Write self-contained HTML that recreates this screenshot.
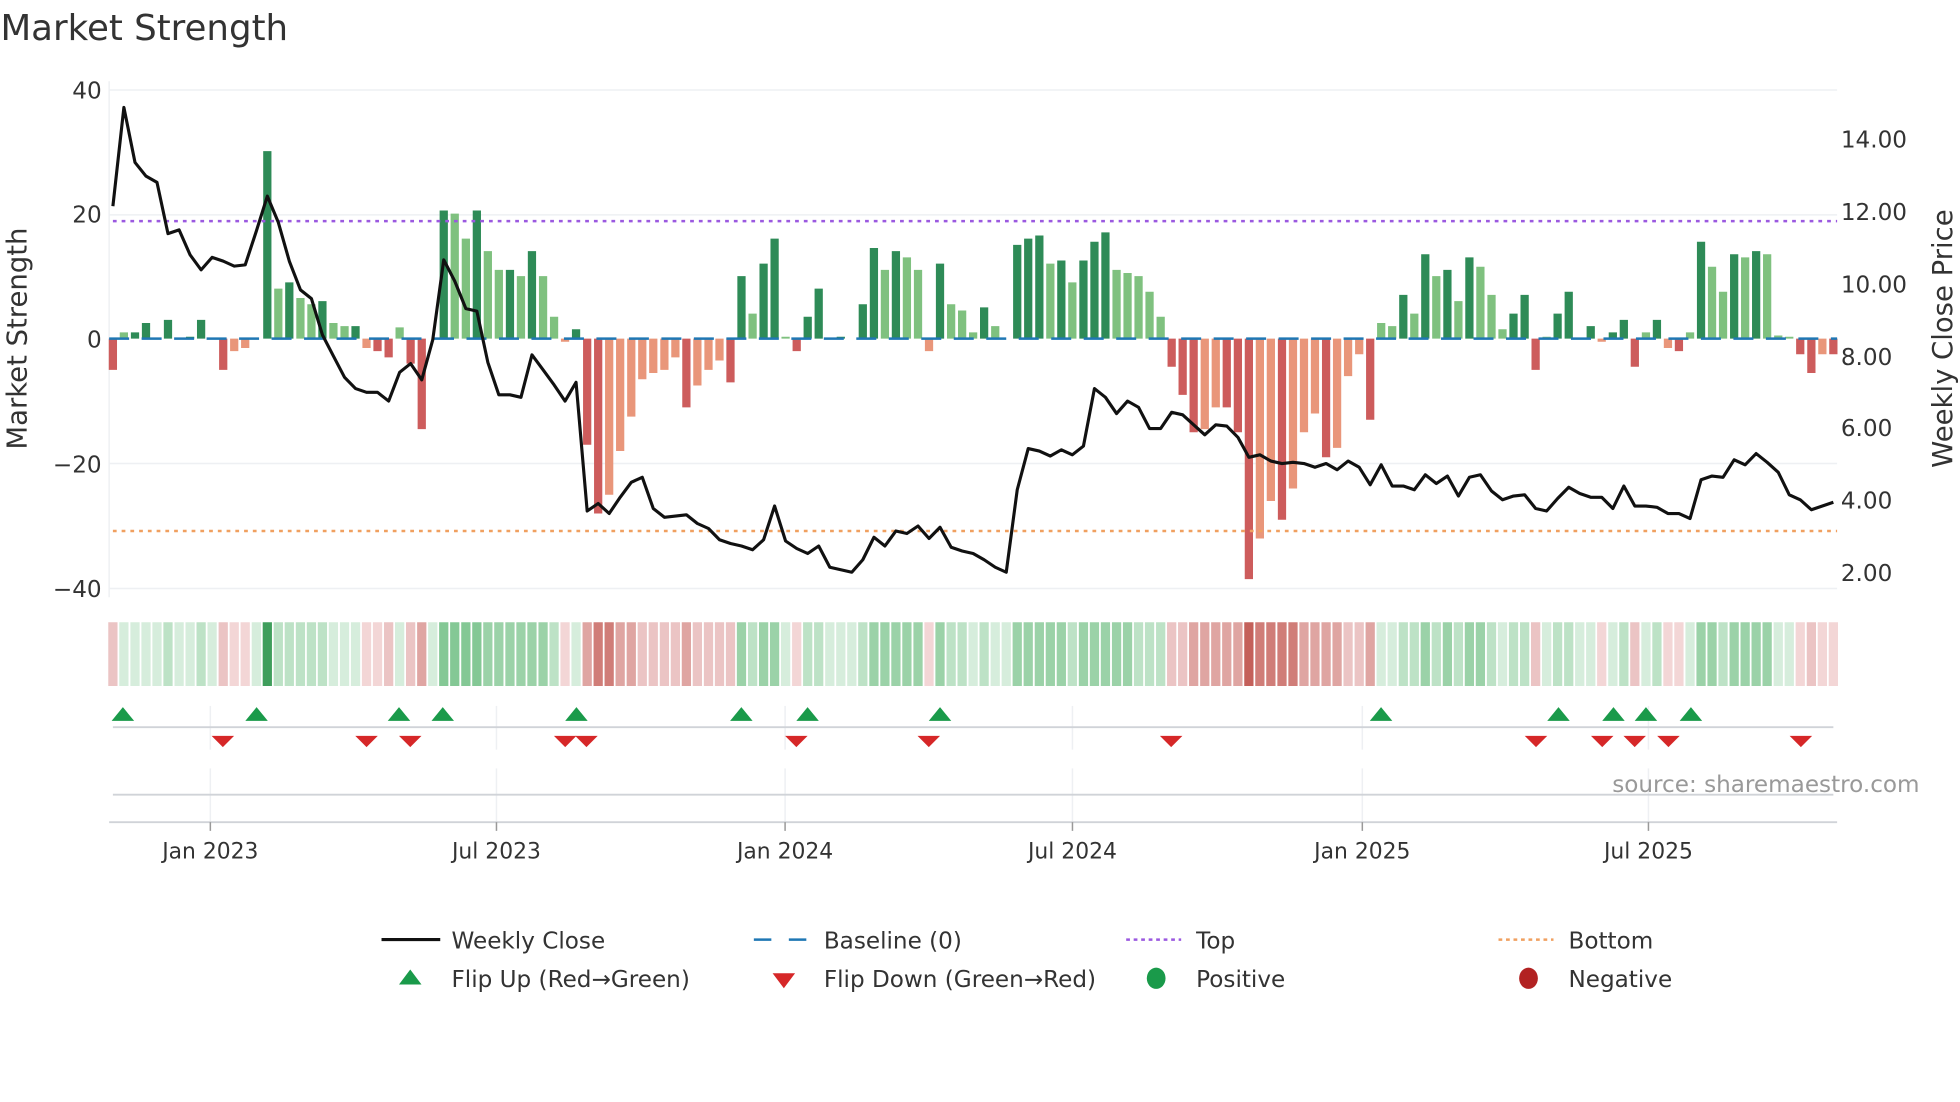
<!DOCTYPE html>
<html><head><meta charset="utf-8"><style>
html,body{margin:0;padding:0;background:#fff;}
svg{display:block;font-family:"DejaVu Sans","Liberation Sans",sans-serif;}
</style></head><body>
<svg width="1960" height="1102" viewBox="0 0 1568 882" xmlns="http://www.w3.org/2000/svg">
<rect width="1568" height="882" fill="#fff"/>
<text x="0" y="32" font-size="28.5" fill="#333">Market Strength</text>
<g stroke="#eef0f3" stroke-width="1.2">
<line x1="87" y1="72" x2="1470" y2="72"/><line x1="87" y1="172" x2="1470" y2="172"/>
<line x1="87" y1="371" x2="1470" y2="371"/><line x1="87" y1="471" x2="1470" y2="471"/>
<line x1="87" y1="65" x2="87" y2="478"/>
<line x1="168" y1="565" x2="168" y2="600"/><line x1="397" y1="565" x2="397" y2="600"/><line x1="628" y1="565" x2="628" y2="600"/><line x1="858" y1="565" x2="858" y2="600"/><line x1="1090" y1="565" x2="1090" y2="600"/><line x1="1319" y1="565" x2="1319" y2="600"/>
<line x1="168" y1="615" x2="168" y2="658"/><line x1="397" y1="615" x2="397" y2="658"/><line x1="628" y1="615" x2="628" y2="658"/><line x1="858" y1="615" x2="858" y2="658"/><line x1="1090" y1="615" x2="1090" y2="658"/><line x1="1319" y1="615" x2="1319" y2="658"/>
</g>
<!-- bars -->
<path fill="#2e8b57" d="M104.4 271v-5h6.6V271zM113.2 271v-12.5h6.6V271zM130.8 271v-15h6.6V271zM148.5 271v-1.5h6.6V271zM157.3 271v-15h6.6V271zM210.3 271v-150h6.6V271zM227.9 271v-45h6.6V271zM254.4 271v-30h6.6V271zM280.9 271v-10h6.6V271zM351.5 271v-102.5h6.6V271zM378 271v-102.5h6.6V271zM404.5 271v-55h6.6V271zM422.1 271v-70h6.6V271zM457.4 271v-7.5h6.6V271zM589.8 271v-50h6.6V271zM607.5 271v-60h6.6V271zM616.3 271v-80h6.6V271zM642.8 271v-17.5h6.6V271zM651.6 271v-40h6.6V271zM669.3 271v-1.5h6.6V271zM686.9 271v-27.5h6.6V271zM695.8 271v-72.5h6.6V271zM713.4 271v-70h6.6V271zM748.7 271v-60h6.6V271zM784 271v-25h6.6V271zM810.5 271v-75h6.6V271zM819.3 271v-80h6.6V271zM828.2 271v-82.5h6.6V271zM845.8 271v-62.5h6.6V271zM863.5 271v-62.5h6.6V271zM872.3 271v-77.5h6.6V271zM881.1 271v-85h6.6V271zM1119.5 271v-35h6.6V271zM1137.1 271v-67.5h6.6V271zM1154.8 271v-55h6.6V271zM1172.4 271v-65h6.6V271zM1207.7 271v-20h6.6V271zM1216.6 271v-35h6.6V271zM1243 271v-20h6.6V271zM1251.9 271v-37.5h6.6V271zM1269.5 271v-10h6.6V271zM1287.2 271v-5h6.6V271zM1296 271v-15h6.6V271zM1322.5 271v-15h6.6V271zM1357.8 271v-77.5h6.6V271zM1384.3 271v-67.5h6.6V271zM1401.9 271v-70h6.6V271z"/>
<path fill="#7fc17f" d="M95.5 271v-5h6.6V271zM219.1 271v-40h6.6V271zM236.8 271v-32.5h6.6V271zM245.6 271v-27.5h6.6V271zM263.2 271v-12.5h6.6V271zM272.1 271v-10h6.6V271zM316.2 271v-9h6.6V271zM360.3 271v-100h6.6V271zM369.2 271v-80h6.6V271zM386.8 271v-70h6.6V271zM395.6 271v-55h6.6V271zM413.3 271v-50h6.6V271zM431 271v-50h6.6V271zM439.8 271v-17.5h6.6V271zM598.7 271v-20h6.6V271zM625.1 271v-1.5h6.6V271zM704.6 271v-55h6.6V271zM722.2 271v-65h6.6V271zM731.1 271v-55h6.6V271zM757.6 271v-27.5h6.6V271zM766.4 271v-22.5h6.6V271zM775.2 271v-5h6.6V271zM792.9 271v-10h6.6V271zM837 271v-60h6.6V271zM854.6 271v-45h6.6V271zM890 271v-55h6.6V271zM898.8 271v-52.5h6.6V271zM907.6 271v-50h6.6V271zM916.4 271v-37.5h6.6V271zM925.3 271v-17.5h6.6V271zM1101.8 271v-12.5h6.6V271zM1110.6 271v-10h6.6V271zM1128.3 271v-20h6.6V271zM1145.9 271v-50h6.6V271zM1163.6 271v-30h6.6V271zM1181.2 271v-57.5h6.6V271zM1190.1 271v-35h6.6V271zM1198.9 271v-7.5h6.6V271zM1234.2 271v-1.5h6.6V271zM1313.7 271v-5h6.6V271zM1349 271v-5h6.6V271zM1366.6 271v-57.5h6.6V271zM1375.4 271v-37.5h6.6V271zM1393.1 271v-65h6.6V271zM1410.7 271v-67.5h6.6V271zM1419.6 271v-2.5h6.6V271zM1428.4 271v-1.5h6.6V271z"/>
<path fill="#cd5c5c" d="M86.7 271v25h6.6V271zM175 271v25h6.6V271zM298.5 271v10h6.6V271zM307.4 271v15h6.6V271zM325 271v20h6.6V271zM333.9 271v72.5h6.6V271zM466.3 271v85h6.6V271zM475.1 271v140h6.6V271zM545.7 271v55h6.6V271zM581 271v35h6.6V271zM634 271v10h6.6V271zM934.1 271v22.5h6.6V271zM942.9 271v45h6.6V271zM951.7 271v75h6.6V271zM978.2 271v55h6.6V271zM987.1 271v75h6.6V271zM995.9 271v192.5h6.6V271zM1022.4 271v145h6.6V271zM1057.7 271v95h6.6V271zM1093 271v65h6.6V271zM1225.4 271v25h6.6V271zM1304.8 271v22.5h6.6V271zM1340.1 271v10h6.6V271zM1437.2 271v12.5h6.6V271zM1446.1 271v27.5h6.6V271zM1463.7 271v12.5h6.6V271z"/>
<path fill="#e9967a" d="M183.8 271v10h6.6V271zM192.6 271v7.5h6.6V271zM289.7 271v7.5h6.6V271zM448.6 271v2.5h6.6V271zM483.9 271v125h6.6V271zM492.7 271v90h6.6V271zM501.6 271v62.5h6.6V271zM510.4 271v32.5h6.6V271zM519.2 271v27.5h6.6V271zM528.1 271v25h6.6V271zM536.9 271v15h6.6V271zM554.5 271v37.5h6.6V271zM563.4 271v25h6.6V271zM572.2 271v17.5h6.6V271zM739.9 271v10h6.6V271zM960.6 271v72.5h6.6V271zM969.4 271v55h6.6V271zM1004.7 271v160h6.6V271zM1013.5 271v130h6.6V271zM1031.2 271v120h6.6V271zM1040 271v75h6.6V271zM1048.8 271v60h6.6V271zM1066.5 271v87.5h6.6V271zM1075.3 271v30h6.6V271zM1084.2 271v12.5h6.6V271zM1278.3 271v2.5h6.6V271zM1331.3 271v7.5h6.6V271zM1454.9 271v12.5h6.6V271z"/>
<line x1="87" y1="271" x2="1470" y2="271" stroke="#1f77b4" stroke-width="2" stroke-dasharray="16,10"/>
<line x1="90" y1="177" x2="1470" y2="177" stroke="#9b59e0" stroke-width="2" stroke-dasharray="3,4"/>
<line x1="90" y1="425" x2="1470" y2="425" stroke="#f0a060" stroke-width="2" stroke-dasharray="3,4"/>
<polyline fill="none" stroke="#111" stroke-width="2.5" stroke-linejoin="round" points="90,165 98.8,86 107.7,130 116.5,141 125.3,146 134.1,187 143,184 151.8,204 160.6,216 169.4,206 178.3,209 187.1,213 195.9,212 204.8,185 213.6,157 222.4,178 231.2,209 240.1,232 248.9,239 257.7,268 266.5,285 275.4,302 284.2,311 293,314 301.8,314 310.7,321 319.5,298 328.3,291 337.2,304 346,272 354.8,208 363.6,225 372.5,247 381.3,249 390.1,290 398.9,316 407.8,316 416.6,318 425.4,284 434.3,296 443.1,308 451.9,321 460.7,306 469.6,409 478.4,403 487.2,411 496,398 504.9,386 513.7,382 522.5,407 531.4,414 540.2,413 549,412 557.8,419 566.7,423 575.5,432 584.3,435 593.1,437 602,440 610.8,432 619.6,405 628.4,433 637.3,439 646.1,443 654.9,437 663.8,454 672.6,456 681.4,458 690.2,448 699.1,430 707.9,437 716.7,425 725.5,427 734.4,421 743.2,431 752,422 760.9,438 769.7,441 778.5,443 787.3,448 796.2,454 805,458 813.8,392 822.6,359 831.5,361 840.3,365 849.1,360 857.9,364 866.8,357 875.6,311 884.4,318 893.3,331 902.1,321 910.9,326 919.7,343 928.6,343 937.4,330 946.2,332 955,340 963.9,348 972.7,340 981.5,341 990.4,350 999.2,366 1008,364 1016.8,369 1025.7,371 1034.5,370 1043.3,371 1052.1,374 1061,371 1069.8,376 1078.6,369 1087.5,374 1096.3,388 1105.1,372 1113.9,389 1122.8,389 1131.6,392 1140.4,380 1149.2,387 1158.1,381 1166.9,397 1175.7,382 1184.5,380 1193.4,393 1202.2,400 1211,397 1219.9,396 1228.7,407 1237.5,409 1246.3,399 1255.2,390 1264,395 1272.8,398 1281.6,398 1290.5,407 1299.3,389 1308.1,405 1317,405 1325.8,406 1334.6,411 1343.4,411 1352.3,415 1361.1,384 1369.9,381 1378.7,382 1387.6,368 1396.4,372 1405.2,363 1414,370 1422.9,378 1431.7,396 1440.5,400 1449.4,408 1458.2,405 1467,402"/>
<!-- heat strip -->
<path fill="#d6eddc" d="M95.1 498h7.4v51h-7.4zM104 498h7.4v51h-7.4zM112.8 498h7.4v51h-7.4zM121.6 498h7.4v51h-7.4zM139.3 498h7.4v51h-7.4zM148.1 498h7.4v51h-7.4zM165.7 498h7.4v51h-7.4zM201.1 498h7.4v51h-7.4zM262.8 498h7.4v51h-7.4zM271.7 498h7.4v51h-7.4zM280.5 498h7.4v51h-7.4zM315.8 498h7.4v51h-7.4zM342.3 498h7.4v51h-7.4zM457 498h7.4v51h-7.4zM624.7 498h7.4v51h-7.4zM660.1 498h7.4v51h-7.4zM668.9 498h7.4v51h-7.4zM677.7 498h7.4v51h-7.4zM774.8 498h7.4v51h-7.4zM792.5 498h7.4v51h-7.4zM801.3 498h7.4v51h-7.4zM1101.4 498h7.4v51h-7.4zM1110.2 498h7.4v51h-7.4zM1198.5 498h7.4v51h-7.4zM1233.8 498h7.4v51h-7.4zM1260.3 498h7.4v51h-7.4zM1269.1 498h7.4v51h-7.4zM1286.8 498h7.4v51h-7.4zM1313.3 498h7.4v51h-7.4zM1348.6 498h7.4v51h-7.4zM1419.2 498h7.4v51h-7.4zM1428 498h7.4v51h-7.4z"/>
<path fill="#bde2c6" d="M130.4 498h7.4v51h-7.4zM156.9 498h7.4v51h-7.4zM218.7 498h7.4v51h-7.4zM227.5 498h7.4v51h-7.4zM236.4 498h7.4v51h-7.4zM245.2 498h7.4v51h-7.4zM254 498h7.4v51h-7.4zM439.4 498h7.4v51h-7.4zM598.3 498h7.4v51h-7.4zM642.4 498h7.4v51h-7.4zM651.2 498h7.4v51h-7.4zM686.5 498h7.4v51h-7.4zM757.2 498h7.4v51h-7.4zM766 498h7.4v51h-7.4zM783.6 498h7.4v51h-7.4zM854.2 498h7.4v51h-7.4zM907.2 498h7.4v51h-7.4zM916 498h7.4v51h-7.4zM924.9 498h7.4v51h-7.4zM1119.1 498h7.4v51h-7.4zM1127.9 498h7.4v51h-7.4zM1145.5 498h7.4v51h-7.4zM1163.2 498h7.4v51h-7.4zM1189.7 498h7.4v51h-7.4zM1207.3 498h7.4v51h-7.4zM1216.2 498h7.4v51h-7.4zM1242.6 498h7.4v51h-7.4zM1251.5 498h7.4v51h-7.4zM1295.6 498h7.4v51h-7.4zM1322.1 498h7.4v51h-7.4zM1375 498h7.4v51h-7.4z"/>
<path fill="#9bd2a8" d="M386.4 498h7.4v51h-7.4zM395.2 498h7.4v51h-7.4zM404.1 498h7.4v51h-7.4zM412.9 498h7.4v51h-7.4zM421.7 498h7.4v51h-7.4zM430.6 498h7.4v51h-7.4zM589.4 498h7.4v51h-7.4zM607.1 498h7.4v51h-7.4zM615.9 498h7.4v51h-7.4zM695.4 498h7.4v51h-7.4zM704.2 498h7.4v51h-7.4zM713 498h7.4v51h-7.4zM721.8 498h7.4v51h-7.4zM730.7 498h7.4v51h-7.4zM748.3 498h7.4v51h-7.4zM810.1 498h7.4v51h-7.4zM818.9 498h7.4v51h-7.4zM827.8 498h7.4v51h-7.4zM836.6 498h7.4v51h-7.4zM845.4 498h7.4v51h-7.4zM863.1 498h7.4v51h-7.4zM871.9 498h7.4v51h-7.4zM880.7 498h7.4v51h-7.4zM889.6 498h7.4v51h-7.4zM898.4 498h7.4v51h-7.4zM1136.7 498h7.4v51h-7.4zM1154.4 498h7.4v51h-7.4zM1172 498h7.4v51h-7.4zM1180.8 498h7.4v51h-7.4zM1357.4 498h7.4v51h-7.4zM1366.2 498h7.4v51h-7.4zM1383.9 498h7.4v51h-7.4zM1392.7 498h7.4v51h-7.4zM1401.5 498h7.4v51h-7.4zM1410.3 498h7.4v51h-7.4z"/>
<path fill="#84c895" d="M351.1 498h7.4v51h-7.4zM359.9 498h7.4v51h-7.4zM368.8 498h7.4v51h-7.4zM377.6 498h7.4v51h-7.4z"/>
<path fill="#3f9e5c" d="M209.9 498h7.4v51h-7.4z"/>
<path fill="#f3d6d6" d="M183.4 498h7.4v51h-7.4zM192.2 498h7.4v51h-7.4zM289.3 498h7.4v51h-7.4zM298.1 498h7.4v51h-7.4zM448.2 498h7.4v51h-7.4zM633.6 498h7.4v51h-7.4zM739.5 498h7.4v51h-7.4zM1277.9 498h7.4v51h-7.4zM1330.9 498h7.4v51h-7.4zM1339.7 498h7.4v51h-7.4zM1436.8 498h7.4v51h-7.4zM1454.5 498h7.4v51h-7.4zM1463.3 498h7.4v51h-7.4z"/>
<path fill="#ebc4c4" d="M86.3 498h7.4v51h-7.4zM174.6 498h7.4v51h-7.4zM307 498h7.4v51h-7.4zM324.6 498h7.4v51h-7.4zM510 498h7.4v51h-7.4zM518.8 498h7.4v51h-7.4zM527.7 498h7.4v51h-7.4zM536.5 498h7.4v51h-7.4zM554.1 498h7.4v51h-7.4zM563 498h7.4v51h-7.4zM571.8 498h7.4v51h-7.4zM580.6 498h7.4v51h-7.4zM933.7 498h7.4v51h-7.4zM942.5 498h7.4v51h-7.4zM1074.9 498h7.4v51h-7.4zM1083.8 498h7.4v51h-7.4zM1225 498h7.4v51h-7.4zM1304.4 498h7.4v51h-7.4zM1445.7 498h7.4v51h-7.4z"/>
<path fill="#dfa5a2" d="M333.5 498h7.4v51h-7.4zM465.9 498h7.4v51h-7.4zM492.3 498h7.4v51h-7.4zM501.2 498h7.4v51h-7.4zM545.3 498h7.4v51h-7.4zM951.3 498h7.4v51h-7.4zM960.2 498h7.4v51h-7.4zM969 498h7.4v51h-7.4zM977.8 498h7.4v51h-7.4zM986.7 498h7.4v51h-7.4zM1039.6 498h7.4v51h-7.4zM1048.4 498h7.4v51h-7.4zM1057.3 498h7.4v51h-7.4zM1066.1 498h7.4v51h-7.4zM1092.6 498h7.4v51h-7.4z"/>
<path fill="#d07d78" d="M474.7 498h7.4v51h-7.4zM483.5 498h7.4v51h-7.4zM1004.3 498h7.4v51h-7.4zM1013.1 498h7.4v51h-7.4zM1022 498h7.4v51h-7.4zM1030.8 498h7.4v51h-7.4z"/>
<path fill="#c4605a" d="M995.5 498h7.4v51h-7.4z"/>
<g stroke="#d0d3d8" stroke-width="1.5">
<line x1="90" y1="582" x2="1467" y2="582"/><line x1="90" y1="636" x2="1467" y2="636"/><line x1="87" y1="658" x2="1470" y2="658"/>
</g>
<g stroke="#999" stroke-width="1.2">
<line x1="168" y1="658" x2="168" y2="665"/><line x1="397" y1="658" x2="397" y2="665"/><line x1="628" y1="658" x2="628" y2="665"/><line x1="858" y1="658" x2="858" y2="665"/><line x1="1090" y1="658" x2="1090" y2="665"/><line x1="1319" y1="658" x2="1319" y2="665"/>
</g>
<g fill="#1a9a4a">
<polygon points="89,577 107,577 98,566"/><polygon points="196,577 214,577 205,566"/><polygon points="310,577 328,577 319,566"/><polygon points="345,577 363,577 354,566"/><polygon points="452,577 470,577 461,566"/><polygon points="584,577 602,577 593,566"/><polygon points="637,577 655,577 646,566"/><polygon points="743,577 761,577 752,566"/><polygon points="1096,577 1114,577 1105,566"/><polygon points="1238,577 1256,577 1247,566"/><polygon points="1282,577 1300,577 1291,566"/><polygon points="1308,577 1326,577 1317,566"/><polygon points="1344,577 1362,577 1353,566"/>
</g>
<g fill="#d62728">
<polygon points="169,589 187,589 178,598"/><polygon points="284,589 302,589 293,598"/><polygon points="319,589 337,589 328,598"/><polygon points="443,589 461,589 452,598"/><polygon points="460,589 478,589 469,598"/><polygon points="628,589 646,589 637,598"/><polygon points="734,589 752,589 743,598"/><polygon points="928,589 946,589 937,598"/><polygon points="1220,589 1238,589 1229,598"/><polygon points="1273,589 1291,589 1282,598"/><polygon points="1299,589 1317,589 1308,598"/><polygon points="1326,589 1344,589 1335,598"/><polygon points="1432,589 1450,589 1441,598"/>
</g>
<g font-size="17.5" fill="#333" text-anchor="middle">
<text x="168" y="687">Jan 2023</text><text x="397" y="687">Jul 2023</text><text x="628" y="687">Jan 2024</text><text x="858" y="687">Jul 2024</text><text x="1090" y="687">Jan 2025</text><text x="1319" y="687">Jul 2025</text>
</g>
<g font-size="18.5" fill="#333" text-anchor="end">
<text x="81" y="79">40</text><text x="81" y="178">20</text><text x="81" y="278">0</text><text x="81" y="378">−20</text><text x="81" y="478">−40</text>
</g>
<g font-size="18.5" fill="#333">
<text x="1473" y="118">14.00</text><text x="1473" y="176">12.00</text><text x="1473" y="234">10.00</text><text x="1473" y="292">8.00</text><text x="1473" y="349">6.00</text><text x="1473" y="407">4.00</text><text x="1473" y="465">2.00</text>
</g>
<text transform="translate(21,271) rotate(-90)" font-size="22" fill="#333" text-anchor="middle">Market Strength</text>
<text transform="translate(1562,271) rotate(-90)" font-size="22" fill="#333" text-anchor="middle">Weekly Close Price</text>
<text x="1536" y="634" font-size="18.5" fill="#999" text-anchor="end">source: sharemaestro.com</text>
<g font-size="18.5" fill="#333">
<line x1="305" y1="752" x2="352" y2="752" stroke="#111" stroke-width="2.5"/><text x="361" y="759">Weekly Close</text>
<line x1="603" y1="752" x2="646" y2="752" stroke="#1f77b4" stroke-width="2" stroke-dasharray="14,14"/><text x="659" y="759">Baseline (0)</text>
<line x1="901" y1="752" x2="945" y2="752" stroke="#9b59e0" stroke-width="2" stroke-dasharray="3,3"/><text x="957" y="759">Top</text>
<line x1="1199" y1="752" x2="1243" y2="752" stroke="#f0a060" stroke-width="2" stroke-dasharray="3,3"/><text x="1255" y="759">Bottom</text>
<polygon points="319,788 337,788 328,776" fill="#1a9a4a"/><text x="361" y="790">Flip Up (Red→Green)</text>
<polygon points="618,779 636,779 627,791" fill="#d62728"/><text x="659" y="790">Flip Down (Green→Red)</text>
<ellipse cx="925" cy="783" rx="7.5" ry="8.5" fill="#1a9a4a"/><text x="957" y="790">Positive</text>
<ellipse cx="1223" cy="783" rx="7.5" ry="8.5" fill="#b22222"/><text x="1255" y="790">Negative</text>
</g>
</svg>
</body></html>
